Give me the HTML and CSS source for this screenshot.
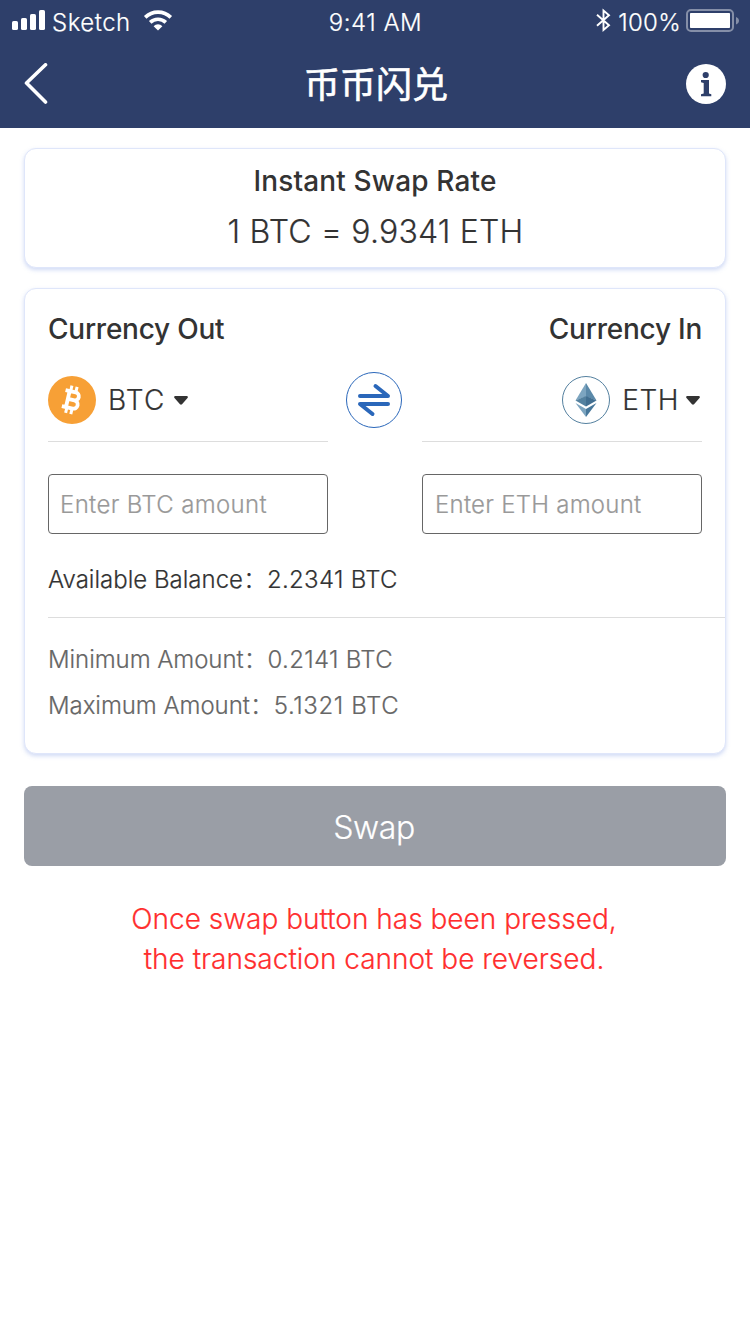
FILE: index.html
```html
<!DOCTYPE html>
<html lang="zh-CN">
<head>
<meta charset="utf-8">
<title>币币闪兑</title>
<link rel="stylesheet" href="styles.css">
</head>
<body>
<header class="header">
  <div class="status">
    <div class="status-left">
      <svg class="signal" width="33" height="20" viewBox="0 0 33 20" fill="#fff"><rect x="0" y="11" width="6" height="9" rx="1.6"/><rect x="9" y="8" width="6" height="12" rx="1.6"/><rect x="18" y="4" width="6" height="16" rx="1.6"/><rect x="27" y="0" width="6" height="20" rx="1.6"/></svg>
      <span class="carrier">Sketch</span>
      <svg class="wifi" width="30" height="22" viewBox="0 0 30 22"><g fill="none" stroke="#fff" stroke-width="3.6"><path d="M2.2 7.4a18.2 18.2 0 0 1 25.6 0"/><path d="M7.2 12.4a11.1 11.1 0 0 1 15.6 0"/></g><path fill="#fff" d="M10.6 16.2a6.2 6.2 0 0 1 8.8 0L15 20.6z"/></svg>
    </div>
    <span class="clock">9:41 AM</span>
    <div class="status-right">
      <svg width="15" height="25" viewBox="0 0 15 25" fill="none" stroke="#fff" stroke-width="1.9"><path d="M1 6.8 13 17.2 7.5 22V2.5L13 7.2 1 17.8"/></svg>
      <span class="percent">100%</span>
      <svg class="battery" width="53" height="23" viewBox="0 0 53 23"><rect x="1" y="1" width="46" height="21" rx="4" fill="none" stroke="#fff" stroke-opacity=".42" stroke-width="2"/><rect x="4" y="4" width="40" height="15" rx=".8" fill="#fff"/><path d="M50 8c4 1.500 4 6 0 7.500z" fill="#fff" fill-opacity=".42"/></svg>
    </div>
  </div>
  <nav class="nav">
    <svg class="back" width="25" height="42" viewBox="0 0 25 42" fill="none" stroke="#fff" stroke-width="3.600" stroke-linecap="round" stroke-linejoin="round"><path d="M21.500 1.800 2.500 20l19 19"/></svg>
    <h1 class="title">币币闪兑</h1>
    <svg class="info" width="40" height="40" viewBox="0 0 40 40"><circle cx="20" cy="20" r="20" fill="#fff"/><g fill="#2e3f6a"><circle cx="19.700" cy="11" r="3.100"/><path d="M15 16h8v13.500l2.300.800v2H15v-2l2.700-.800V18.900L15 18.200z"/></g></svg>
  </nav>
</header>
<main class="main">
  <section class="card rate">
    <h2 class="heading rate-title">Instant Swap Rate</h2>
    <p class="rate-value">1 BTC = 9.9341 ETH</p>
  </section>
  <section class="card swap">
    <div class="heads">
      <h2 class="heading side">Currency Out</h2>
      <h2 class="heading side">Currency In</h2>
    </div>
    <div class="pair">
      <div class="coin">
        <svg width="48" height="48" viewBox="0 0 48 48"><circle cx="24" cy="24" r="24" fill="#f7a036"/><g transform="rotate(13 24 24)" fill="none" stroke="#fff"><path stroke-width="3.800" d="M15.500 15.800H26a4 4 0 0 1 0 8h-6M15.500 32.200H26.500a4.200 4.200 0 0 0 0-8.400H20M19.700 15v18"/><path stroke-width="3" d="M20.700 10v5M26 10v5M20.700 33v5M26 33v5"/></g></svg>
        <span class="symbol btc">BTC</span>
        <svg class="caret" width="14" height="9" viewBox="0 0 14 9"><path fill="#333" d="M1 0h12q1.500.800.500 2L8 8.300q-1 .900-2 0L.500 2Q-.500.800 1 0z"/></svg>
      </div>
      <svg class="exchange" width="56" height="56" viewBox="0 0 56 56" fill="none" stroke="#2a67ba"><circle cx="28" cy="28" r="27.500"/><path stroke-width="4" stroke-linecap="round" stroke-linejoin="round" d="M14 24h28L29.500 14M42 32H14l12.500 10"/></svg>
      <div class="coin coin-in">
        <svg width="48" height="48" viewBox="0 0 48 48"><circle cx="24" cy="24" r="23.500" fill="#fff" stroke="#54809f"/><path fill="#7da5c0" d="M24 7v13.500L13.500 24.500z"/><path fill="#5b89a9" d="M24 7v13.500l10.500 4z"/><path fill="#54819f" d="M13.500 24.500 24 20v10.500z"/><path fill="#426f91" d="M34.500 24.500 24 20v10.500z"/><path fill="#7da5c0" d="m13.500 27 10.500 6v8z"/><path fill="#47779a" d="m34.500 27-10.500 6v8z"/></svg>
        <span class="symbol eth">ETH</span>
        <svg class="caret" width="14" height="9" viewBox="0 0 14 9"><path fill="#333" d="M1 0h12q1.500.800.500 2L8 8.300q-1 .900-2 0L.500 2Q-.500.800 1 0z"/></svg>
      </div>
    </div>
    <div class="amounts">
      <input class="amount amount-btc" type="text" placeholder="Enter BTC amount">
      <input class="amount amount-eth" type="text" placeholder="Enter ETH amount">
    </div>
    <p class="balance">Available Balance：<span class="value">2.2341 BTC</span></p>
    <div class="limits">
      <p><span class="limit-label">Minimum Amount</span>：<span class="value">0.2141 BTC</span></p>
      <p><span class="limit-label">Maximum Amount</span>：<span class="value value-max">5.1321 BTC</span></p>
    </div>
  </section>
  <button class="submit" type="button">Swap</button>
  <p class="warning">Once swap button has been pressed,<br>the transaction cannot be reversed.</p>
</main>
</body>
</html>
```
FILE: styles.css
```css
* { box-sizing: border-box; margin: 0; padding: 0; }
body { font-family: Inter, "Noto Sans CJK SC", sans-serif; font-weight: 300; color: #333; background: #fff; -webkit-text-stroke: .2px; }
svg { display: block; flex: none; }
.header { height: 128px; background: #2e3f6a; color: #fff; }
.status { display: grid; grid-template-columns: 1fr auto 1fr; height: 40px; padding: 0 11px 0 12px; font-size: 24px; line-height: 46px; }
.status-left, .status-right { display: flex; align-items: flex-start; }
.status-right { justify-content: flex-end; }
.signal { margin: 10px 7px 0 0; }
.carrier { letter-spacing: .5px; }
.clock { letter-spacing: .5px; }
.wifi { margin: 10px 0 0 12px; }
.status-right svg { margin-top: 8px; }
.status-right .battery { margin-top: 9px; }
.percent { margin: 0 5px 0 7px; letter-spacing: .3px; }
.nav { display: grid; grid-template-columns: 1fr auto 1fr; align-items: center; height: 88px; padding: 0 24px; }
.info { justify-self: end; }
.title { padding: 1px 0 0 2px; font-size: 36px; font-weight: 400; line-height: 50px; -webkit-text-stroke: .6px; }
.main { padding: 20px 24px 0; }
.card { border: 1px solid #dfe6fa; border-radius: 12px; background: #fff; box-shadow: 0 2px 4px rgba(120, 150, 225, .35); }
.rate { height: 120px; padding-top: 12px; text-align: center; }
.heading { font-size: 28px; font-weight: 500; line-height: 40px; -webkit-text-stroke: 0; }
.rate-title { letter-spacing: .15px; }
.side { letter-spacing: -.24px; }
.rate-value { margin-top: 8px; padding-left: 1px; font-size: 32px; line-height: 45px; letter-spacing: .2px; }
.swap { height: 466px; margin-top: 20px; padding: 20px 0 0 23px; }
.heads, .pair, .amounts { display: flex; justify-content: space-between; margin-right: 23px; }
.pair { height: 93px; padding-top: 23px; }
.exchange { margin-left: -2px; }
.coin { display: flex; align-items: center; width: 280px; height: 70px; padding-bottom: 14px; border-bottom: 1px solid #ddd; }
.coin-in { justify-content: flex-end; padding-right: 2px; }
.symbol { padding-top: 1px; font-size: 28px; }
.caret { margin-top: 1px; }
.btc { margin: 0 8.5px 0 12px; letter-spacing: 1.2px; }
.eth { margin: 0 7px 0 12px; letter-spacing: .5px; }
.amounts { margin-top: 32px; }
.amount { width: 280px; height: 60px; padding: 1px 11px 0; border: 1px solid #666; border-radius: 4px; font: inherit; font-size: 24px; letter-spacing: .35px; }
.amount-eth { padding-left: 12px; letter-spacing: .25px; }
.amount::placeholder { color: #999; }
.balance { height: 84px; padding-top: 29px; border-bottom: 1px solid #ddd; font-size: 24px; line-height: 34px; }
.value { letter-spacing: .3px; }
.value-max { letter-spacing: .6px; }
.limits { padding-top: 19px; color: #666; font-size: 24px; line-height: 46px; }
.limit-label { letter-spacing: -.06px; }
.submit { display: block; width: 100%; height: 80px; margin-top: 32px; padding: 2px 2px 0 0; border: 0; border-radius: 8px; background: #9a9ea6; color: #fff; font: inherit; font-size: 32px; letter-spacing: -.4px; }
.warning { margin: 33px 2px 0 0; color: #ff2e2e; text-align: center; font-size: 28px; line-height: 40px; }
```
